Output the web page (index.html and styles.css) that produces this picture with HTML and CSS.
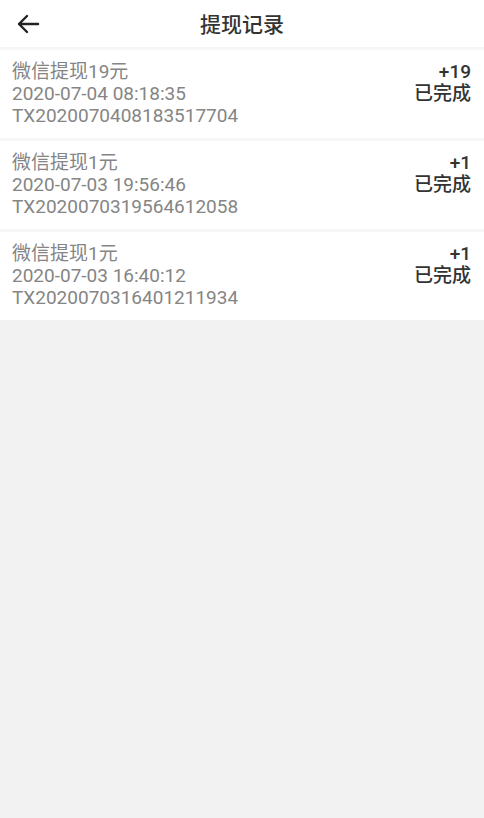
FILE: index.html
```html
<!DOCTYPE html>
<html lang="zh-CN">
<head>
    <meta charset="UTF-8">
    <title>提现记录</title>
    <meta name="viewport" content="width=device-width, initial-scale=1.0">
    <link rel="stylesheet" href="styles.css">
</head>
<body>
    <div class="header">
        <a class="back" href="#">
            <svg width="24" height="20" viewBox="0 0 24 20">
                <path d="M22 10H3M11 2L3 10l8 8" fill="none" stroke="#222" stroke-width="2.4" stroke-linecap="round" stroke-linejoin="round"/>
            </svg>
        </a>
        <h1>提现记录</h1>
    </div>

    <div class="list">
        <div class="record">
            <div class="info">
                <div>微信提现19元</div>
                <div>2020-07-04 08:18:35</div>
                <div>TX2020070408183517704</div>
            </div>
            <div class="status">
                <div>+19</div>
                <div>已完成</div>
            </div>
        </div>
        <div class="record">
            <div class="info">
                <div>微信提现1元</div>
                <div>2020-07-03 19:56:46</div>
                <div>TX2020070319564612058</div>
            </div>
            <div class="status">
                <div>+1</div>
                <div>已完成</div>
            </div>
        </div>
        <div class="record">
            <div class="info">
                <div>微信提现1元</div>
                <div>2020-07-03 16:40:12</div>
                <div>TX2020070316401211934</div>
            </div>
            <div class="status">
                <div>+1</div>
                <div>已完成</div>
            </div>
        </div>
    </div>
</body>
</html>
```

FILE: styles.css
```css
body {
    margin: 0;
    background: #f2f2f2;
    font-family: Roboto, "Noto Sans CJK SC", sans-serif;
    height: 100vh;
}

.header {
    height: 47px;
    background: white;
    border-bottom: 3px solid #f6f6f6;
    display: flex;
    align-items: center;
    justify-content: center;
    position: relative;
}

.header h1 {
    margin: 0 0 2px;
    font-size: 21px;
    font-weight: 500;
    color: #333;
}

.back {
    position: absolute;
    left: 16px;
    top: 14px;
    display: flex;
}

.list {
    background: white;
}

.record {
    height: 66px;
    padding: 11px 13px 11px 12px;
    display: flex;
    justify-content: space-between;
    border-bottom: 3px solid #f6f6f6;
    font-size: 19px;
    line-height: 22px;
}

.record:last-child {
    border-bottom: none;
}

.info {
    color: #858585;
}

.status {
    text-align: right;
    color: #333;
    font-weight: 500;
}
```
